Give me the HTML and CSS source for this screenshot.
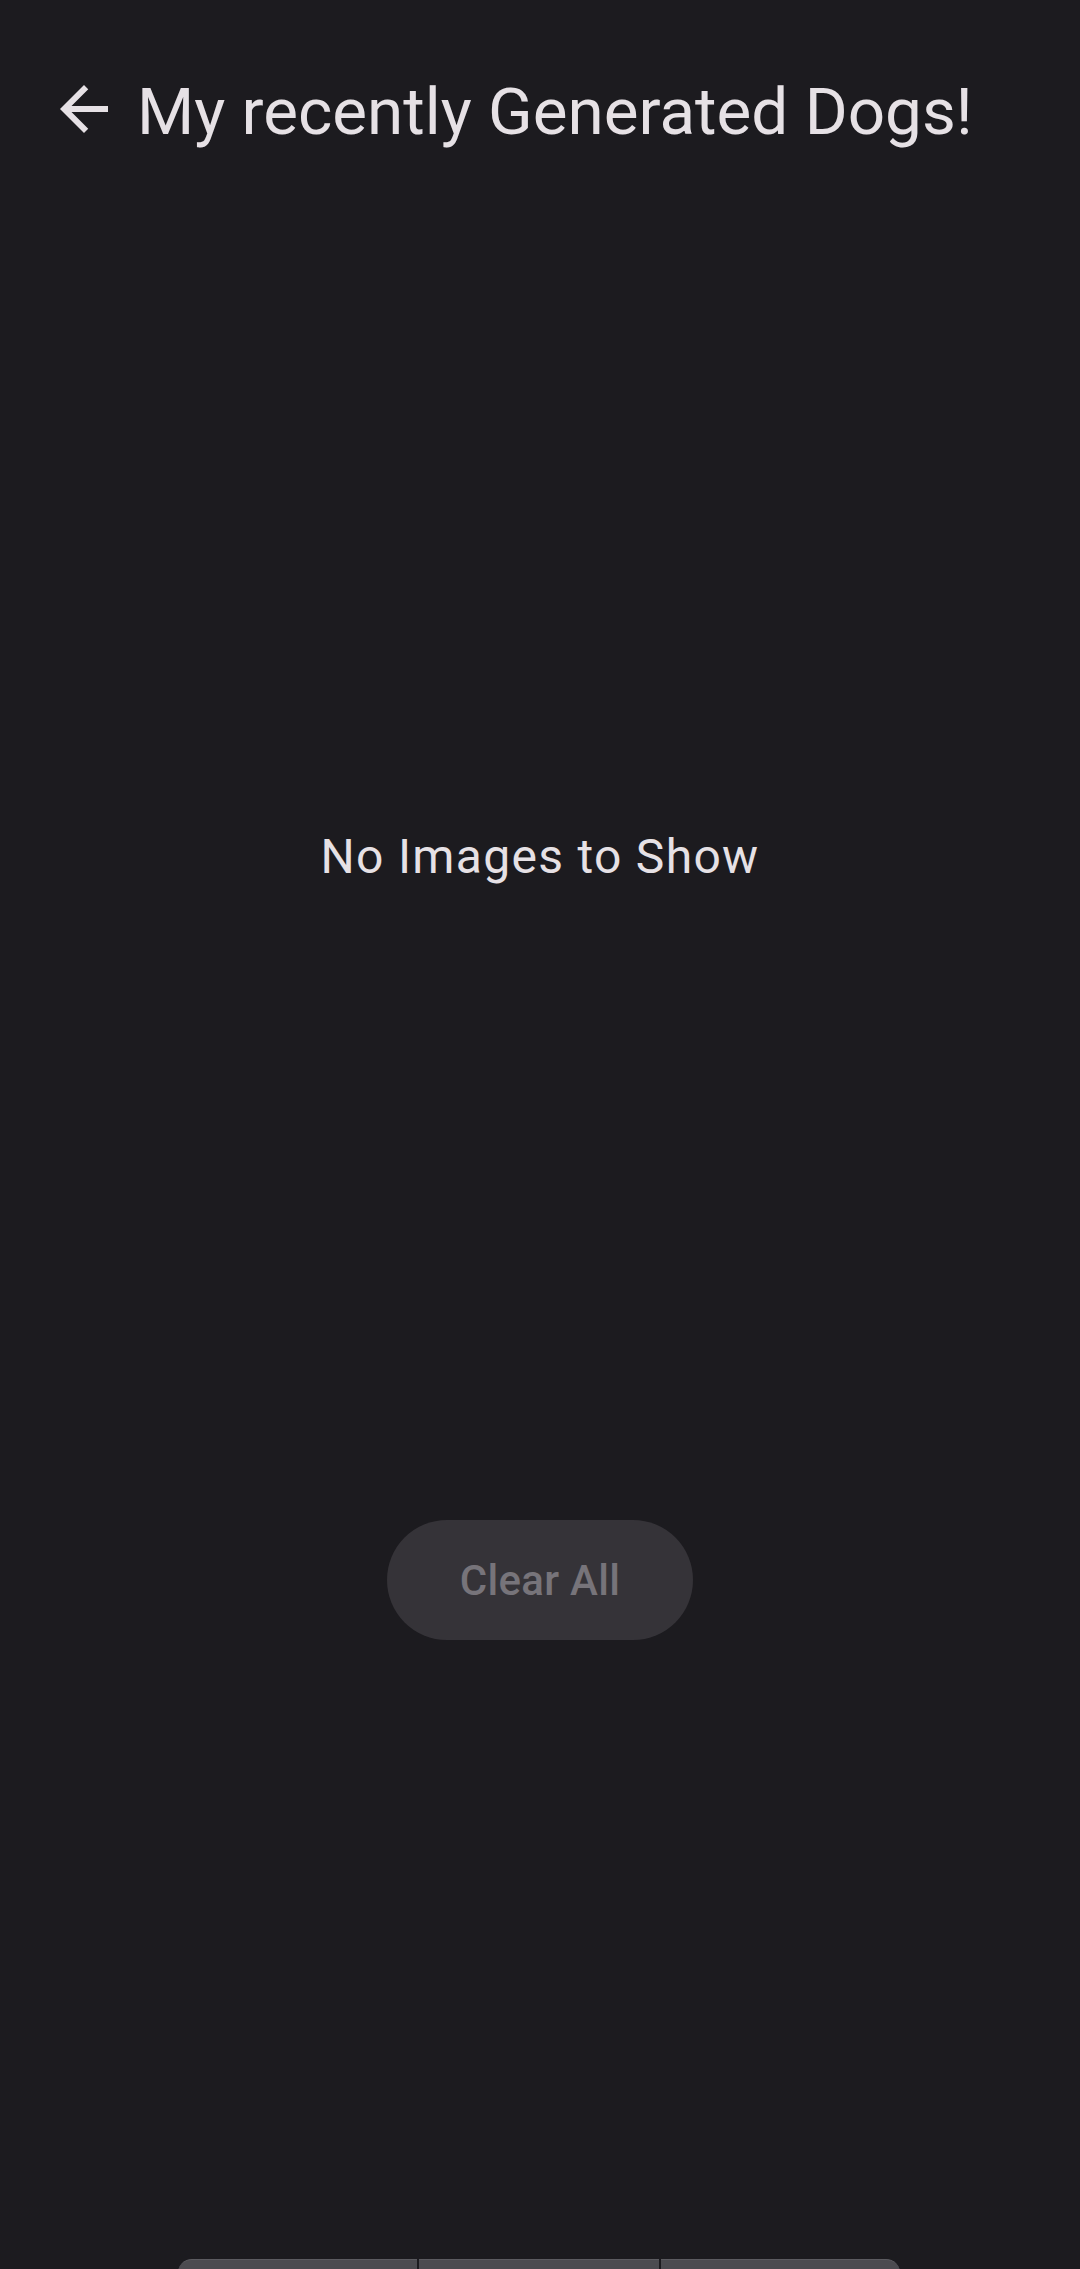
FILE: index.html
```
<!DOCTYPE html>
<html lang="en">
<head>
<meta charset="utf-8">
<title>My recently Generated Dogs!</title>
<link rel="stylesheet" href="styles.css">
</head>
<body>
<div class="screen">
  <header class="app-bar">
    <svg class="back-icon" viewBox="0 0 24 24" aria-label="Back">
      <path d="M20 11H7.83l5.59-5.59L12 4l-8 8 8 8 1.41-1.41L7.83 13H20v-2z"/>
    </svg>
    <h1 class="title">My recently Generated Dogs!</h1>
  </header>
  <main class="content">
    <p class="empty">No Images to Show</p>
    <button class="clear-btn" disabled>Clear All</button>
  </main>
  <div class="bottom-bar">
    <div class="segment first"></div>
    <div class="segment"></div>
    <div class="segment last"></div>
  </div>
</div>
</body>
</html>
```
FILE: styles.css
```
html, body {
  margin: 0;
  padding: 0;
  background: #1c1b1f;
}
body {
  font-family: Roboto, "Noto Sans", sans-serif;
  color: #e6e1e5;
}
.screen {
  width: 1080px;
  height: 2269px;
  display: flex;
  flex-direction: column;
  overflow: hidden;
}
.app-bar {
  display: flex;
  align-items: center;
  height: 84px;
  padding: 70px 0 0 48px;
}
.back-icon {
  width: 72px;
  height: 72px;
  fill: #e6e1e5;
  flex-shrink: 0;
  margin-right: 17px;
  margin-bottom: 7px;
}
.title {
  margin: 0;
  font-size: 65.6px;
  line-height: 84px;
  font-weight: 400;
  white-space: nowrap;
}
.content {
  display: flex;
  flex-direction: column;
  align-items: center;
}
.empty {
  margin: 667px 0 0;
  font-size: 48px;
  line-height: 72px;
  letter-spacing: 1.3px;
}
.clear-btn {
  margin-top: 627px;
  height: 120px;
  padding: 0 73px;
  border: none;
  border-radius: 60px;
  background: #353338;
  color: #77747a;
  font-family: Roboto, "Noto Sans", sans-serif;
  font-size: 42px;
  font-weight: 500;
  letter-spacing: 0.3px;
}
.bottom-bar {
  margin: auto 0 0 178px;
  width: 722px;
  height: 10px;
  display: flex;
  gap: 2px;
  overflow: hidden;
}
.segment {
  flex: 1;
  height: 60px;
  background: #4c4b50;
  border-top: 1px solid #5c5b60;
}
.segment.first {
  border-top-left-radius: 14px;
}
.segment.last {
  border-top-right-radius: 14px;
}
```
